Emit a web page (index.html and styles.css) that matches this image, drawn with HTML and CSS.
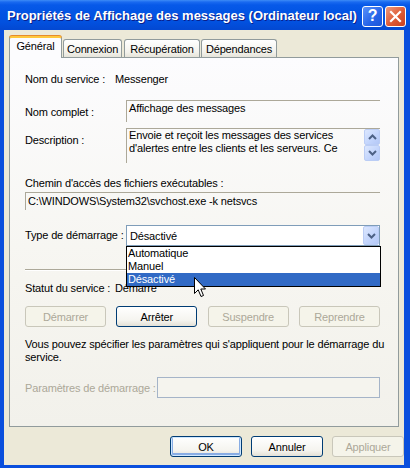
FILE: index.html
```html
<!DOCTYPE html>
<html lang="fr">
<head>
<meta charset="utf-8">
<title>Propriétés de Affichage des messages</title>
<link rel="stylesheet" href="styles.css">
</head>
<body>
<div class="window">
  <div class="titlebar">
    <span class="title">Propriétés de Affichage des messages (Ordinateur local)</span>
    <div class="caption-buttons">
      <div class="cbtn help">?</div>
      <div class="cbtn close">
        <svg width="13" height="13" viewBox="0 0 13 13"><path d="M2 2 L11 11 M11 2 L2 11" stroke="#fff" stroke-width="2.2" stroke-linecap="square"/></svg>
      </div>
    </div>
  </div>
  <div class="frame">
    <div class="client">
      <div class="tabs">
        <div class="tab active tab-gen">Général</div>
        <div class="tab tab-con">Connexion</div>
        <div class="tab tab-rec">Récupération</div>
        <div class="tab tab-dep">Dépendances</div>
      </div>
      <div class="panel">
        <div class="row r-service"><span class="lbl-s">Nom du service :</span><span>Messenger</span></div>
        <div class="row r-complet">
          <span class="lbl">Nom complet :</span>
          <div class="rbox box-complet">Affichage des messages</div>
        </div>
        <div class="row r-desc">
          <span class="lbl">Description :</span>
          <div class="rbox box-desc">
            <div class="desc-text">Envoie et reçoit les messages des services d'alertes entre les clients et les serveurs. Ce</div>
            <div class="scroll">
              <div class="sbtn"><svg width="9" height="6" viewBox="0 0 9 6"><path d="M1 5 L4.5 1.5 L8 5" fill="none" stroke="#4D6185" stroke-width="2"/></svg></div>
              <div class="sbtn"><svg width="9" height="6" viewBox="0 0 9 6"><path d="M1 1 L4.5 4.5 L8 1" fill="none" stroke="#4D6185" stroke-width="2"/></svg></div>
            </div>
          </div>
        </div>
        <div class="r-path-lbl">Chemin d'accès des fichiers exécutables :</div>
        <div class="rbox box-path">C:\WINDOWS\System32\svchost.exe -k netsvcs</div>
        <div class="row r-type">
          <span class="lbl lbl-type">Type de démarrage :</span>
          <div class="combo">
            <span class="combo-val">Désactivé</span>
            <div class="combo-btn"><svg width="9" height="6" viewBox="0 0 9 6"><path d="M1 1 L4.5 4.5 L8 1" fill="none" stroke="#4D6185" stroke-width="2"/></svg></div>
            <div class="droplist">
              <div class="item">Automatique</div>
              <div class="item">Manuel</div>
              <div class="item selected">Désactivé</div>
              <svg class="cursor" width="13" height="21" viewBox="0 0 13 21"><path d="M0.5 0.5 L0.5 16.5 L4.2 12.8 L7 19.5 L9.5 18.5 L6.8 12 L11.5 12 Z" fill="#fff" stroke="#000" stroke-width="1" stroke-linejoin="miter"/></svg>
            </div>
          </div>
        </div>
        <div class="sep"></div>
        <div class="row r-status"><span class="lbl-s">Statut du service :</span><span>Démarré</span></div>
        <div class="svc-buttons">
          <div class="btn disabled">Démarrer</div>
          <div class="btn">Arrêter</div>
          <div class="btn disabled">Suspendre</div>
          <div class="btn disabled">Reprendre</div>
        </div>
        <p class="info">Vous pouvez spécifier les paramètres qui s'appliquent pour le démarrage du service.</p>
        <div class="row r-params">
          <span class="lbl-p">Paramètres de démarrage :</span>
          <div class="params-input"></div>
        </div>
      </div>
      <div class="dialog-buttons">
        <div class="btn dbtn default">OK</div>
        <div class="btn dbtn">Annuler</div>
        <div class="btn dbtn disabled">Appliquer</div>
      </div>
    </div>
  </div>
</div>
</body>
</html>
```

FILE: styles.css
```css
* { box-sizing: border-box; }
html, body { margin: 0; padding: 0; }
body {
  width: 410px;
  height: 468px;
  overflow: hidden;
  background: #fff;
  font-family: "Liberation Sans", Arial, sans-serif;
  font-size: 11px;
  letter-spacing: -0.15px;
  color: #000;
}
.window {
  width: 410px;
  height: 468px;
  display: flex;
  flex-direction: column;
  background: #0A4FDD;
}
.titlebar {
  height: 30px;
  flex: none;
  display: flex;
  align-items: center;
  padding: 0 4px 0 7px;
  background: linear-gradient(to bottom, #3D8CF6 0px, #1A6AF0 2px, #0759E8 5px, #0254E3 14px, #0251DF 22px, #0349D3 29px);
}
.title {
  flex: 1;
  color: #fff;
  font-family: "Liberation Sans", Arial, sans-serif;
  font-weight: bold;
  font-size: 13px;
  letter-spacing: 0;
  white-space: nowrap;
  text-shadow: 1px 1px 0 #0A1E8A;
  margin-top: 1px;
}
.caption-buttons { display: flex; gap: 2px; margin-top: 2px; }
.cbtn {
  width: 21px;
  height: 21px;
  border: 1px solid #fff;
  border-radius: 3px;
  display: flex;
  align-items: center;
  justify-content: center;
  color: #fff;
}
.help {
  background: linear-gradient(135deg, #5A92FA, #2563E8 60%, #1D55D8);
  font-weight: bold;
  font-size: 16px;
  font-family: "Liberation Sans", Arial, sans-serif;
}
.close {
  background: linear-gradient(135deg, #EE9A7C, #DE5A35 55%, #C8401F);
}
.frame {
  flex: 1;
  display: flex;
  padding: 0 6px 3px 4px;
}
.client {
  flex: 1;
  background: #ECE9D8;
  display: flex;
  flex-direction: column;
}
.tabs {
  height: 27px;
  display: flex;
  align-items: flex-end;
  padding-left: 5px;
  position: relative;
  z-index: 2;
}
.tab {
  height: 18px;
  border: 1px solid #919B9C;
  border-bottom: none;
  border-radius: 3px 3px 0 0;
  background: linear-gradient(#FFFFFF, #F3F2EC 70%, #E6E4DA);
  display: flex;
  align-items: center;
  justify-content: center;
  padding-top: 1px;
  margin-right: 1px;
  white-space: nowrap;
}
.tab.active {
  height: 22px;
  margin-bottom: -1px;
  background: #FCFCFE;
  border-top: 2px solid #FFC83C;
  box-shadow: 0 -1px 0 #E68B2C;
  padding-top: 0;
  padding-bottom: 4px;
}
.tab-gen { width: 53px; }
.tab-con { width: 59px; }
.tab-rec { width: 76px; margin-left: 1px; }
.tab-dep { width: 76px; }
.panel {
  height: 370px;
  margin-left: 5px;
  width: 390px;
  border: 1px solid #919B9C;
  background: linear-gradient(#FCFCFE, #F6F5F0 60%, #F2F1EB);
  padding: 0 17px 0 15px;
  position: relative;
  white-space: nowrap;
}
.row { display: flex; }
.lbl-s { width: 90px; flex: none; }
.lbl { width: 101px; flex: none; padding-top: 5px; line-height: 14px; }
.r-service { margin-top: 14px; line-height: 14px; }
.rbox {
  border-top: 1px solid #ACA899;
  border-left: 1px solid #ACA899;
  line-height: 13px;
}
.r-complet { margin-top: 14px; }
.box-complet { width: 254px; height: 22px; padding: 1px 0 0 2px; }
.r-desc { margin-top: 6px; }
.box-desc { width: 254px; height: 35px; display: flex; }
.desc-text { flex: 1; padding: 0 4px 0 2px; white-space: normal; }
.scroll { width: 16px; display: flex; flex-direction: column; }
.sbtn {
  width: 16px;
  height: 16px;
  border: 1px solid #BBCDF5;
  border-radius: 2px;
  background: linear-gradient(135deg, #DCE7FE, #C2D4FC 60%, #B4C8F6);
  display: flex;
  align-items: center;
  justify-content: center;
}
.r-path-lbl { margin-top: 13px; line-height: 14px; }
.box-path { margin-top: 2px; width: 355px; height: 18px; padding: 2px 0 0 2px; }
.r-type { margin-top: 15px; }
.lbl-type { padding-top: 0; line-height: 21px; }
.combo {
  width: 254px;
  height: 21px;
  border: 1px solid #7F9DB9;
  background: #fff;
  position: relative;
  display: flex;
  align-items: center;
}
.combo-val { flex: 1; padding-left: 3px; }
.combo-btn {
  width: 16px;
  height: 19px;
  border: 1px solid #BBCDF5;
  border-radius: 2px;
  background: linear-gradient(135deg, #DCE7FE, #C2D4FC 60%, #B4C8F6);
  display: flex;
  align-items: center;
  justify-content: center;
}
.droplist {
  position: absolute;
  top: 20px;
  left: -1px;
  width: 255px;
  border: 1px solid #000;
  background: #fff;
  z-index: 5;
}
.item { height: 13px; line-height: 13px; padding-left: 1px; }
.item.selected { background: #316AC5; color: #fff; }
.cursor { position: absolute; left: 67px; top: 30px; }
.sep {
  margin-top: 23px;
  height: 2px;
  border-top: 1px solid #ACA899;
  border-bottom: 1px solid #fff;
}
.r-status { margin-top: 10px; line-height: 14px; }
.svc-buttons {
  margin-top: 11px;
  display: flex;
  justify-content: space-between;
  width: 355px;
}
.btn {
  width: 81px;
  height: 21px;
  border: 1px solid #003C74;
  border-radius: 3px;
  background: linear-gradient(#FFFFFF, #F5F4EF 70%, #E3E0D6);
  display: flex;
  align-items: center;
  justify-content: center;
  white-space: nowrap;
}
.btn.disabled {
  border-color: #C9C7BA;
  color: #ACA899;
  background: #F5F4EA;
}
.info { margin: 11px 0 0; line-height: 13px; width: 362px; white-space: normal; }
.r-params { margin-top: 13px; align-items: center; }
.lbl-p { width: 132px; flex: none; color: #ACA899; }
.params-input {
  width: 223px;
  height: 21px;
  border: 1px solid #A5B4C8;
  background: #F5F4EE;
}
.dialog-buttons {
  margin-top: 9px;
  display: flex;
  justify-content: flex-end;
  gap: 9px;
}
.dbtn { width: 72px; }
.btn.default {
  box-shadow: inset 0 0 0 1px #CEE7FF, inset 0 -1px 0 2px #89ADE4;
}
```
